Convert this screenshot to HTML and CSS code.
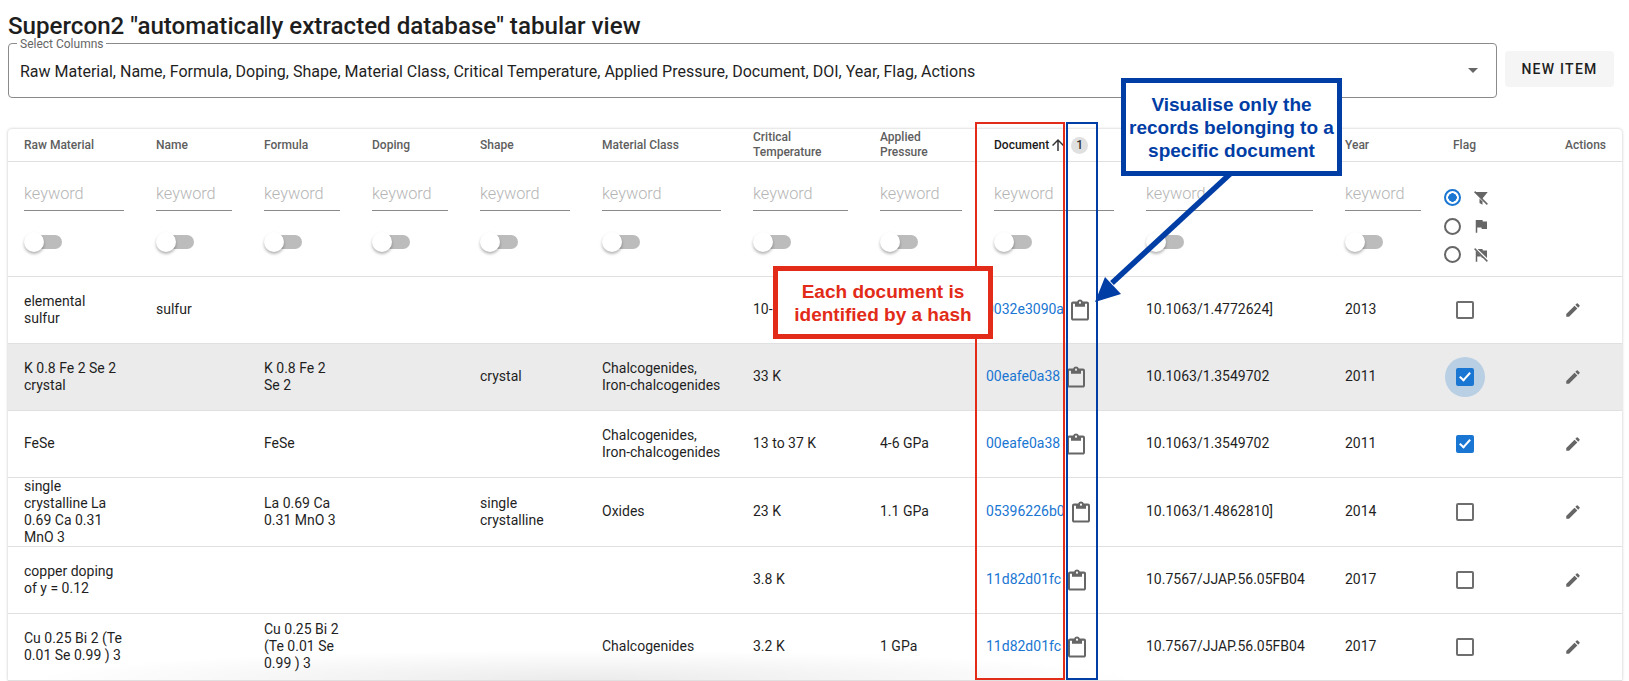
FILE: index.html
```html
<!DOCTYPE html>
<html lang="en">
<head>
  <meta charset="UTF-8" />
  <meta name="viewport" content="width=device-width, initial-scale=1.0"/>
  <title>Supercon2 tabular view</title>
  <link rel="stylesheet" href="styles.css">
</head>
<body>
  <svg class="sprites" width="0" height="0">
    <symbol id="i-clip" viewBox="3 0.5 18 21" preserveAspectRatio="none"><path d="M19 3h-4.18C14.4 1.84 13.3 1 12 1c-1.3 0-2.4.84-2.82 2H5c-1.1 0-2 .9-2 2v14c0 1.1.9 2 2 2h14c1.1 0 2-.9 2-2V5c0-1.1-.9-2-2-2zm-7 0c.55 0 1 .45 1 1s-.45 1-1 1-1-.45-1-1 .45-1 1-1zm7 16H5V5h2v3h10V5h2v14z"/></symbol>
    <symbol id="i-edit" viewBox="0 0 24 24"><path d="M3 17.25V21h3.75L17.81 9.94l-3.75-3.75L3 17.25zM20.71 7.04c.39-.39.39-1.02 0-1.41l-2.34-2.34a.9959.9959 0 0 0-1.41 0l-1.83 1.83 3.75 3.75 1.83-1.83z"/></symbol>
  </svg>

  <div class="page">
    <h1>Supercon2 "automatically extracted database" tabular view</h1>

    <div class="toolbar">
      <div class="select-box">
        <span class="select-label">Select Columns</span>
        <span class="select-value">Raw Material, Name, Formula, Doping, Shape, Material Class, Critical Temperature, Applied Pressure, Document, DOI, Year, Flag, Actions</span>
        <span class="select-arrow"></span>
      </div>
      <button class="new-item">NEW ITEM</button>
    </div>

    <div class="table-card">
      <table>
        <colgroup>
          <col class="c-raw"><col class="c-name"><col class="c-formula"><col class="c-doping"><col class="c-shape"><col class="c-class"><col class="c-temp"><col class="c-press"><col class="c-doc"><col class="c-doi"><col class="c-year"><col class="c-flag"><col class="c-actions">
        </colgroup>
        <thead>
          <tr>
            <th>Raw Material</th>
            <th>Name</th>
            <th>Formula</th>
            <th>Doping</th>
            <th>Shape</th>
            <th>Material Class</th>
            <th>Critical Temperature</th>
            <th>Applied Pressure</th>
            <th class="sorted">
              <div class="sort-head">
                Document
                <svg class="sort-arrow" viewBox="0 0 24 24" width="18" height="18"><path d="M4 12l1.41 1.41L11 7.83V20h2V7.83l5.58 5.59L20 12l-8-8-8 8z"/></svg>
                <span class="sort-badge">1</span>
              </div>
            </th>
            <th></th>
            <th>Year</th>
            <th>Flag</th>
            <th class="actions-head">Actions</th>
          </tr>
        </thead>
        <tbody>
          <tr class="filters">
            <td><div class="kw">keyword</div><div class="switch"></div></td>
            <td><div class="kw">keyword</div><div class="switch"></div></td>
            <td><div class="kw">keyword</div><div class="switch"></div></td>
            <td><div class="kw">keyword</div><div class="switch"></div></td>
            <td><div class="kw">keyword</div><div class="switch"></div></td>
            <td><div class="kw">keyword</div><div class="switch"></div></td>
            <td><div class="kw">keyword</div><div class="switch"></div></td>
            <td><div class="kw">keyword</div><div class="switch"></div></td>
            <td><div class="kw">keyword</div><div class="switch"></div></td>
            <td><div class="kw">keyword</div><div class="switch"></div></td>
            <td><div class="kw">keyword</div><div class="switch"></div></td>
            <td class="flag-filter">
              <div class="radio-row">
                <span class="radio on"></span>
                <svg viewBox="0 0 24 24" width="18" height="18"><path d="M3 4h18l-7 8.500v2L5.500 6z"/><path d="M10 12.500l4 4V21l-4-2.500z"/><path d="M3.500 3.500l17 17" stroke="#666" stroke-width="2" fill="none"/></svg>
              </div>
              <div class="radio-row">
                <span class="radio"></span>
                <svg viewBox="0 0 24 24" width="18" height="18"><path d="M14.400 6L14 4H5v17h2v-7h5.600l.4 2h7V6z"/></svg>
              </div>
              <div class="radio-row">
                <span class="radio"></span>
                <svg viewBox="0 0 24 24" width="18" height="18"><path d="M14.400 6L14 4H7.500l12.500 12V6z"/><path d="M5 6v15h2v-7h5.600l.4 2h2z"/><path d="M3.500 3.500l17 17" stroke="#666" stroke-width="2" fill="none"/></svg>
              </div>
            </td>
            <td></td>
          </tr>

          <tr>
            <td>elemental sulfur</td><td>sulfur</td><td></td><td></td><td></td><td></td>
            <td>10-20 K</td><td></td>
            <td><div class="doc"><a href="#">0032e3090a</a><svg class="clip" width="18" height="22"><use href="#i-clip"/></svg></div></td>
            <td>10.1063/1.4772624]</td><td>2013</td>
            <td><span class="check"></span></td>
            <td class="edit"><svg width="18" height="18"><use href="#i-edit"/></svg></td>
          </tr>
          <tr class="selected">
            <td>K 0.8 Fe 2 Se 2 crystal</td><td></td><td>K 0.8 Fe 2 Se 2</td><td></td><td>crystal</td><td>Chalcogenides, Iron-chalcogenides</td>
            <td>33 K</td><td></td>
            <td><div class="doc"><a href="#">00eafe0a38</a><svg class="clip" width="18" height="22"><use href="#i-clip"/></svg></div></td>
            <td>10.1063/1.3549702</td><td>2011</td>
            <td><span class="check on halo"></span></td>
            <td class="edit"><svg width="18" height="18"><use href="#i-edit"/></svg></td>
          </tr>
          <tr>
            <td>FeSe</td><td></td><td>FeSe</td><td></td><td></td><td>Chalcogenides, Iron-chalcogenides</td>
            <td>13 to 37 K</td><td>4-6 GPa</td>
            <td><div class="doc"><a href="#">00eafe0a38</a><svg class="clip" width="18" height="22"><use href="#i-clip"/></svg></div></td>
            <td>10.1063/1.3549702</td><td>2011</td>
            <td><span class="check on"></span></td>
            <td class="edit"><svg width="18" height="18"><use href="#i-edit"/></svg></td>
          </tr>
          <tr>
            <td>single crystalline La 0.69 Ca 0.31 MnO 3</td><td></td><td>La 0.69 Ca 0.31 MnO 3</td><td></td><td>single crystalline</td><td>Oxides</td>
            <td>23 K</td><td>1.1 GPa</td>
            <td><div class="doc"><a href="#">05396226b0</a><svg class="clip" width="18" height="22"><use href="#i-clip"/></svg></div></td>
            <td>10.1063/1.4862810]</td><td>2014</td>
            <td><span class="check"></span></td>
            <td class="edit"><svg width="18" height="18"><use href="#i-edit"/></svg></td>
          </tr>
          <tr>
            <td>copper doping of y = 0.12</td><td></td><td></td><td></td><td></td><td></td>
            <td>3.8 K</td><td></td>
            <td><div class="doc"><a href="#">11d82d01fc</a><svg class="clip" width="18" height="22"><use href="#i-clip"/></svg></div></td>
            <td>10.7567/JJAP.56.05FB04</td><td>2017</td>
            <td><span class="check"></span></td>
            <td class="edit"><svg width="18" height="18"><use href="#i-edit"/></svg></td>
          </tr>
          <tr>
            <td>Cu 0.25 Bi 2 (Te 0.01 Se 0.99 ) 3</td><td></td><td>Cu 0.25 Bi 2 (Te 0.01 Se 0.99 ) 3</td><td></td><td></td><td>Chalcogenides</td>
            <td>3.2 K</td><td>1 GPa</td>
            <td><div class="doc"><a href="#">11d82d01fc</a><svg class="clip" width="18" height="22"><use href="#i-clip"/></svg></div></td>
            <td>10.7567/JJAP.56.05FB04</td><td>2017</td>
            <td><span class="check"></span></td>
            <td class="edit"><svg width="18" height="18"><use href="#i-edit"/></svg></td>
          </tr>
        </tbody>
      </table>
    </div>
  </div>

  <!-- annotations drawn over the screenshot -->
  <div class="bottom-shade"></div>
  <div class="outline outline-red"></div>
  <div class="outline outline-blue"></div>
  <svg class="pointer" width="1629" height="681" viewBox="0 0 1629 681">
    <path d="M1230 174L1112 283" stroke="#003da5" stroke-width="5.500" fill="none"/>
    <path d="M1095 302L1105 277L1121 294z" fill="#003da5"/>
  </svg>
  <div class="callout callout-red">Each document is<br>identified by a hash</div>
  <div class="callout callout-blue">Visualise only the<br>records belonging to a<br>specific document</div>
</body>
</html>
```

FILE: styles.css
```css
body {
  font-family: Roboto, "Liberation Sans", sans-serif;
  margin: 0;
  background-color: #fff;
  color: #1f1f1f;
  overflow: hidden;
}

.sprites {
  display: block;
  height: 0;
}

.page {
  padding: 9px 7px 0 8px;
}

h1 {
  margin: 0;
  font-size: 24.150px;
  font-weight: 500;
  line-height: 34px;
  color: #1e1e1e;
}

.toolbar {
  display: flex;
  align-items: center;
  gap: 8px;
  margin-right: 8px;
}

.select-box {
  position: relative;
  flex: 1;
  height: 53px;
  display: flex;
  align-items: center;
  border: 1px solid #8a8a8a;
  border-radius: 4px;
  padding: 0 11px;
  justify-content: space-between;
}

.select-label {
  position: absolute;
  top: -6px;
  left: 8px;
  padding: 0 3px;
  background: #fff;
  font-size: 12px;
  line-height: 12px;
  color: #666;
}

.select-value {
  font-size: 16px;
  margin-top: 2px;
}

.select-arrow {
  width: 0;
  height: 0;
  border-left: 5px solid transparent;
  border-right: 5px solid transparent;
  border-top: 5px solid #666;
  margin-right: 7px;
}

.new-item {
  width: 109px;
  height: 36px;
  margin-top: -3px;
  border: none;
  border-radius: 4px;
  background-color: #f5f5f5;
  color: #1f1f1f;
  font-family: inherit;
  font-size: 14px;
  font-weight: 500;
  letter-spacing: 1.25px;
  padding: 0;
}

.table-card {
  margin-top: 31px;
  border-radius: 4px 4px 0 0;
  box-shadow: 0 0 3px rgba(0,0,0,0.25);
  width: 1614px;
}

table {
  width: 1614px;
  border-collapse: collapse;
  table-layout: fixed;
}

.c-raw { width: 132px; }
.c-name, .c-formula, .c-doping, .c-year { width: 108px; }
.c-shape { width: 122px; }
.c-class { width: 151px; }
.c-temp { width: 127px; }
.c-press { width: 114px; }
.c-doc { width: 152px; }
.c-doi { width: 199px; }
.c-flag { width: 100px; }
.c-actions { width: 85px; }

th {
  box-sizing: border-box;
  height: 32px;
  padding: 1px 16px 0;
  border-bottom: 1px solid #e0e0e0;
  font-size: 12px;
  font-weight: 500;
  line-height: 15px;
  text-align: left;
  color: #5e5e5e;
}

th.sorted {
  color: #1a1a1a;
}

.sort-head {
  display: flex;
  align-items: center;
}

.sort-arrow {
  margin-left: 0;
  fill: #333;
  flex: none;
}

.sort-badge {
  flex: none;
  width: 17px;
  height: 17px;
  margin-left: 4px;
  border-radius: 50%;
  background: #e0e0e0;
  font-size: 12px;
  line-height: 17px;
  text-align: center;
  color: #333;
}

th.actions-head {
  padding-left: 0;
  text-align: right;
}

td {
  box-sizing: border-box;
  height: 67px;
  padding: 0 16px;
  border-bottom: 1px solid #e0e0e0;
  font-size: 14px;
  line-height: 17px;
  color: #1f1f1f;
}

.selected td {
  position: relative;
  z-index: 0;
  background-color: #ebebeb;
}

.filters td {
  height: 115px;
  vertical-align: top;
  padding-top: 22px;
}

.kw {
  height: 26px;
  border-bottom: 1px solid #8a8a8a;
  font-size: 16.300px;
  font-weight: 300;
  line-height: 20px;
  color: #b5b5b5;
}

.switch {
  position: relative;
  width: 34px;
  height: 14px;
  margin: 24px 0 0 4px;
  border-radius: 7px;
  background: #bcbcbc;
}

.switch::before {
  content: "";
  position: absolute;
  top: -3px;
  left: -4px;
  width: 20px;
  height: 20px;
  border-radius: 50%;
  background: #fff;
  box-shadow: 0 2px 3px rgba(0,0,0,0.3);
}

.radio-row {
  display: flex;
  align-items: center;
  gap: 11px;
  height: 28.500px;
  margin-left: -9px;
}

.radio-row svg {
  fill: #666;
}

.radio {
  box-sizing: border-box;
  width: 17px;
  height: 17px;
  border: 2px solid #666;
  border-radius: 50%;
}

.radio.on {
  border-color: #1976d2;
  background: radial-gradient(circle, #1976d2 0 4px, #fff 4.500px);
}

.doc {
  display: flex;
  align-items: center;
  gap: 7px;
  margin-left: -8px;
}

.doc a {
  color: #1976d2;
  text-decoration: none;
}

.clip {
  fill: #666;
  flex: none;
}

.check {
  position: relative;
  display: block;
  box-sizing: border-box;
  width: 18px;
  height: 18px;
  margin-left: 3px;
  border: 2px solid #6e6e6e;
  border-radius: 2px;
}

.check.on {
  border-color: #1976d2;
  background: #1976d2;
}

.check.on::after {
  content: "";
  position: absolute;
  top: 0;
  left: 4px;
  width: 4px;
  height: 9px;
  border: solid #fff;
  border-width: 0 2px 2px 0;
  transform: rotate(42deg);
}

.check.halo::before {
  content: "";
  position: absolute;
  top: -13px;
  left: -13px;
  width: 40px;
  height: 40px;
  border-radius: 50%;
  background: #b9cfe3;
  z-index: -1;
}

td.edit {
  padding: 1px 0 0 27px;
}

td.edit svg {
  fill: #666;
  display: block;
}

/* annotations */
.outline {
  position: absolute;
  top: 122px;
  height: 554px;
  border: 2px solid;
}

.outline-red {
  left: 975px;
  width: 86px;
  border-color: #e22b18;
}

.outline-blue {
  left: 1066px;
  width: 28px;
  border-color: #003da5;
}

.pointer {
  position: absolute;
  top: 0;
  left: 0;
  pointer-events: none;
}

.callout {
  position: absolute;
  box-sizing: border-box;
  display: flex;
  align-items: center;
  justify-content: center;
  border: 5px solid;
  background: #fff;
  font-family: "Liberation Sans", Arial, sans-serif;
  font-weight: 700;
  font-size: 19px;
  line-height: 23px;
  text-align: center;
}

.callout-red {
  left: 773px;
  top: 266px;
  width: 220px;
  height: 73px;
  border-color: #e22b18;
  color: #e22b18;
}

.callout-blue {
  left: 1121px;
  top: 78px;
  width: 221px;
  height: 98px;
  border-color: #003da5;
  color: #003da5;
}

.bottom-shade {
  position: absolute;
  left: 30px;
  top: 650px;
  width: 1110px;
  height: 30px;
  background: radial-gradient(ellipse 50% 100% at 50% 100%, rgba(0,0,0,0.08), rgba(0,0,0,0));
  pointer-events: none;
}
```
